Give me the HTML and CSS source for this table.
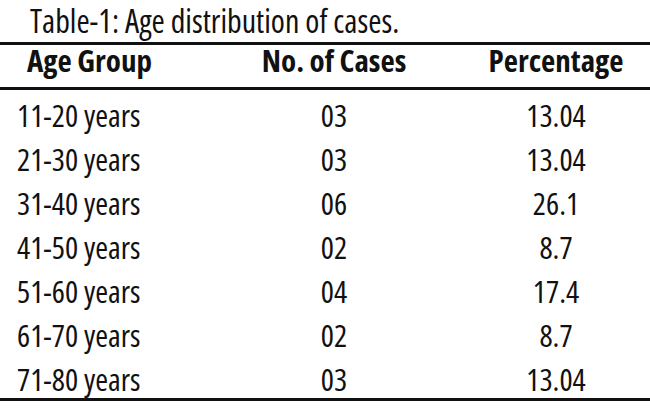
FILE: index.html
```html
<!DOCTYPE html>
<html lang="en">
<head>
<meta charset="utf-8">
<title>Table-1: Age distribution of cases.</title>
<link rel="stylesheet" href="styles.css">
</head>
<body>
<div class="page">
  <div class="caption">Table-1: Age distribution of cases.</div>
  <div class="table">
    <div class="row head">
      <div class="cell c1">Age Group</div>
      <div class="cell c2">No. of Cases</div>
      <div class="cell c3">Percentage</div>
    </div>
    <div class="body">
      <div class="row"><div class="cell c1">11-20 years</div><div class="cell c2">03</div><div class="cell c3">13.04</div></div>
      <div class="row"><div class="cell c1">21-30 years</div><div class="cell c2">03</div><div class="cell c3">13.04</div></div>
      <div class="row"><div class="cell c1">31-40 years</div><div class="cell c2">06</div><div class="cell c3">26.1</div></div>
      <div class="row"><div class="cell c1">41-50 years</div><div class="cell c2">02</div><div class="cell c3">8.7</div></div>
      <div class="row"><div class="cell c1">51-60 years</div><div class="cell c2">04</div><div class="cell c3">17.4</div></div>
      <div class="row"><div class="cell c1">61-70 years</div><div class="cell c2">02</div><div class="cell c3">8.7</div></div>
      <div class="row"><div class="cell c1">71-80 years</div><div class="cell c2">03</div><div class="cell c3">13.04</div></div>
    </div>
  </div>
</div>
</body>
</html>
```
FILE: styles.css
```css
html, body {
  margin: 0;
  padding: 0;
  background: #ffffff;
}
.page {
  width: 650px;
  height: 413px;
  overflow: hidden;
  font-family: "Open Sans", "Liberation Sans", sans-serif;
  font-stretch: 87%;
  font-size: 31px;
  color: #111111;
}
.caption {
  height: 42px;
  line-height: 42px;
  font-size: 32px;
  padding-left: 30px;
  white-space: nowrap;
}
.table {
  border-top: 3px solid #111111;
  border-bottom: 3px solid #111111;
}
.row {
  display: grid;
  grid-template-columns: 214px 240px 196px;
  height: 44px;
  box-sizing: border-box;
  padding-top: 7px;
  line-height: 36px;
}
.row.head {
  height: 42px;
  padding-top: 0;
  line-height: 30px;
  font-weight: bold;
  border-bottom: 3px solid #111111;
  box-sizing: content-box;
}
.cell {
  white-space: nowrap;
}
.c1 {
  padding-left: 17px;
}
.head .c1 {
  padding-left: 27px;
}
.c2 {
  text-align: center;
}
.c3 {
  text-align: center;
  padding-left: 8px;
}
```
